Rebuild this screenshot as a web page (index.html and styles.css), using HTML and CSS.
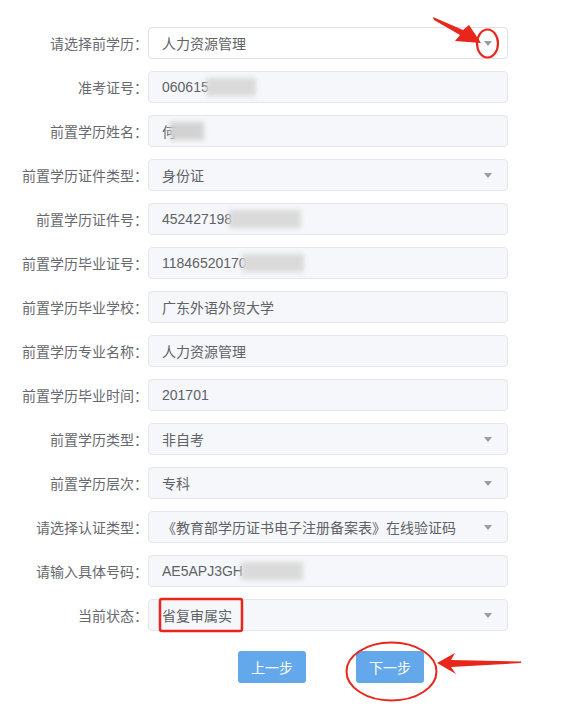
FILE: index.html
```html
<!DOCTYPE html>
<html lang="zh-CN">
<head>
<meta charset="utf-8">
<title>学历信息</title>
<link rel="stylesheet" href="styles.css">
</head>
<body>
<div class="page">
  <form class="form">
    <div class="row"><span class="label">请选择前学历：</span><div class="field field-active"><span class="val">人力资源管理</span><i class="caret"></i></div></div>
    <div class="row"><span class="label">准考证号：</span><div class="field"><span class="val">060615</span><span class="blur blur-a"></span></div></div>
    <div class="row"><span class="label">前置学历姓名：</span><div class="field"><span class="val">何</span><span class="blur blur-b"></span></div></div>
    <div class="row"><span class="label">前置学历证件类型：</span><div class="field"><span class="val">身份证</span><i class="caret"></i></div></div>
    <div class="row"><span class="label">前置学历证件号：</span><div class="field"><span class="val">452427198</span><span class="blur blur-c"></span></div></div>
    <div class="row"><span class="label">前置学历毕业证号：</span><div class="field"><span class="val">11846520170</span><span class="blur blur-d"></span></div></div>
    <div class="row"><span class="label">前置学历毕业学校：</span><div class="field"><span class="val">广东外语外贸大学</span></div></div>
    <div class="row"><span class="label">前置学历专业名称：</span><div class="field"><span class="val">人力资源管理</span></div></div>
    <div class="row"><span class="label">前置学历毕业时间：</span><div class="field"><span class="val">201701</span></div></div>
    <div class="row"><span class="label">前置学历类型：</span><div class="field"><span class="val">非自考</span><i class="caret"></i></div></div>
    <div class="row"><span class="label">前置学历层次：</span><div class="field"><span class="val">专科</span><i class="caret"></i></div></div>
    <div class="row"><span class="label">请选择认证类型：</span><div class="field"><span class="val">《教育部学历证书电子注册备案表》在线验证码</span><i class="caret"></i></div></div>
    <div class="row"><span class="label">请输入具体号码：</span><div class="field"><span class="val">AE5APJ3GH</span><span class="blur blur-e"></span></div></div>
    <div class="row"><span class="label">当前状态：</span><div class="field"><span class="val">省复审属实</span><i class="caret"></i></div></div>
    <div class="actions">
      <button type="button" class="btn">上一步</button>
      <button type="button" class="btn">下一步</button>
    </div>
  </form>
  <svg class="marks" viewBox="0 0 585 711" xmlns="http://www.w3.org/2000/svg">
    <polygon points="433,17 463,30 469,25 481,43 455,41 460,35 434,20" fill="#e8261c"/>
    <ellipse cx="487.5" cy="43.5" rx="10.5" ry="14" fill="none" stroke="#e8261c" stroke-width="2.2"/>
    <rect x="160" y="599" width="82" height="32" rx="2" fill="none" stroke="#e8261c" stroke-width="2.5"/>
    <ellipse cx="391.5" cy="671.5" rx="45" ry="29" fill="none" stroke="#e8261c" stroke-width="2"/>
    <polygon points="437,663 455,653 451,660 521,661.5 521,663 451,667 456,674" fill="#e8261c"/>
  </svg>
</div>
</body>
</html>
```

FILE: styles.css
```css
html, body {
  margin: 0;
  padding: 0;
  background: #ffffff;
}

body {
  font-family: "Liberation Sans", "Noto Sans CJK SC", sans-serif;
}

.page {
  position: relative;
  width: 585px;
  height: 711px;
  overflow: hidden;
}

.form {
  display: flex;
  flex-direction: column;
  gap: 12px;
  padding-top: 27px;
}

.row {
  display: grid;
  grid-template-columns: 148px 360px;
  align-items: center;
  height: 32px;
}

.label {
  text-align: right;
  font-size: 14px;
  color: #67696e;
  white-space: nowrap;
}

.field {
  box-sizing: border-box;
  height: 32px;
  display: flex;
  align-items: center;
  padding: 0 15px 0 13px;
  border: 1px solid #e4e7ed;
  border-radius: 4px;
  background: #f5f7fa;
  color: #606266;
  font-size: 14px;
  white-space: nowrap;
  overflow: hidden;
}

.field-active {
  background: #ffffff;
  border-color: #dcdfe6;
}

.val {
  flex: none;
}

.caret {
  margin-left: auto;
  width: 0;
  height: 0;
  border-left: 4px solid transparent;
  border-right: 4px solid transparent;
  border-top: 5px solid #9a9ca0;
}

.blur {
  flex: none;
  display: inline-block;
  height: 18px;
  background: #dadada;
  filter: blur(2.5px);
  margin-left: -3px;
}

.blur-a { width: 50px; }
.blur-b { width: 34px; background: #d2d2d2; margin-left: -6px; }
.blur-c { width: 72px; }
.blur-d { width: 62px; margin-left: -5px; }
.blur-e { width: 62px; margin-left: -2px; }

.actions {
  display: flex;
  justify-content: center;
  gap: 50px;
  width: 360px;
  margin-left: 151px;
  margin-top: 8px;
}

.btn {
  width: 68px;
  height: 32px;
  border: none;
  border-radius: 3px;
  background: #62a8ea;
  color: #ffffff;
  font-family: "Liberation Sans", "Noto Sans CJK SC", sans-serif;
  font-size: 14px;
  padding: 0;
  cursor: pointer;
}

.marks {
  position: absolute;
  left: 0;
  top: 0;
  width: 585px;
  height: 711px;
  pointer-events: none;
}
```
